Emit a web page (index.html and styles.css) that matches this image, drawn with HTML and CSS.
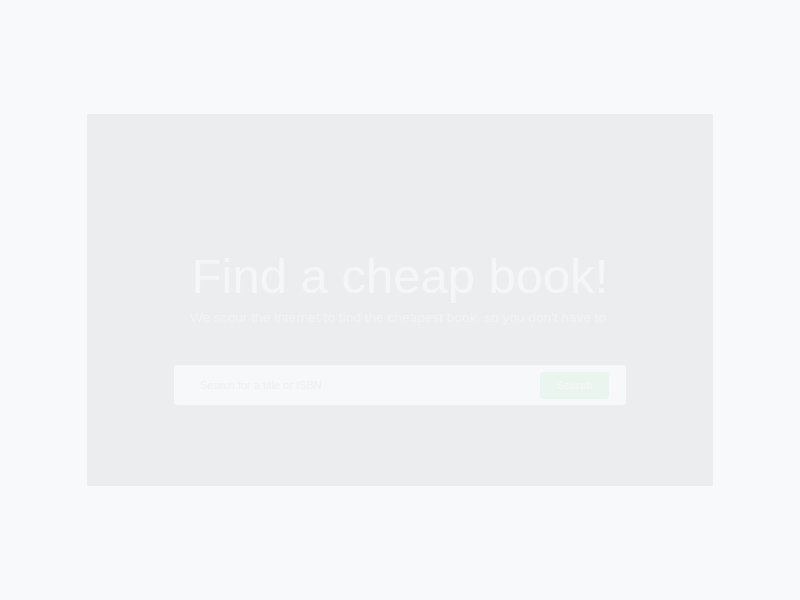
FILE: index.html
```html
<!DOCTYPE html>
<html>
<head>
<meta charset="utf-8">
<link rel="stylesheet" href="styles.css">
</head>
<body>
<div class="page">
  <section class="hero">
    <h1 class="title">Find a cheap book!</h1>
    <p class="subtitle">We scour the internet to find the cheapest book, so you don't have to.</p>
    <form class="search">
      <input class="search-input" type="text" placeholder="Search for a title or ISBN">
      <button class="search-btn" type="button">Search</button>
    </form>
  </section>
</div>
</body>
</html>
```

FILE: styles.css
```css
html, body {
  margin: 0;
  padding: 0;
  background: #f8f9fa;
  font-family: "Liberation Sans", Arial, sans-serif;
}
.page {
  display: flex;
  justify-content: center;
  padding-top: 114px;
}
.hero {
  width: 626px;
  height: 372px;
  box-sizing: border-box;
  background: #ecedef;
  display: flex;
  flex-direction: column;
  align-items: center;
  padding-top: 134px;
}
.title {
  margin: 0;
  font-size: 49px;
  font-weight: 400;
  line-height: 56px;
  color: #f5f6f7;
}
.subtitle {
  margin: 5px 0 0;
  font-size: 13.7px;
  line-height: 18px;
  color: #f3f4f5;
}
.search {
  margin-top: 38px;
  width: 452px;
  height: 40px;
  box-sizing: border-box;
  background: #f7f8fa;
  border-radius: 3px;
  display: flex;
  align-items: center;
  padding: 0 17px 0 26px;
}
.search-input {
  flex: 1;
  border: none;
  outline: none;
  background: transparent;
  font-family: inherit;
  font-size: 11px;
  color: #eff0f2;
  padding: 0;
}
.search-input::placeholder {
  color: #eff0f2;
}
.search-btn {
  width: 69px;
  height: 27px;
  border: none;
  border-radius: 4px;
  background: #eaf5f0;
  color: #f3f8f6;
  font-family: inherit;
  font-size: 11px;
  font-weight: 700;
  padding: 0;
}
```
